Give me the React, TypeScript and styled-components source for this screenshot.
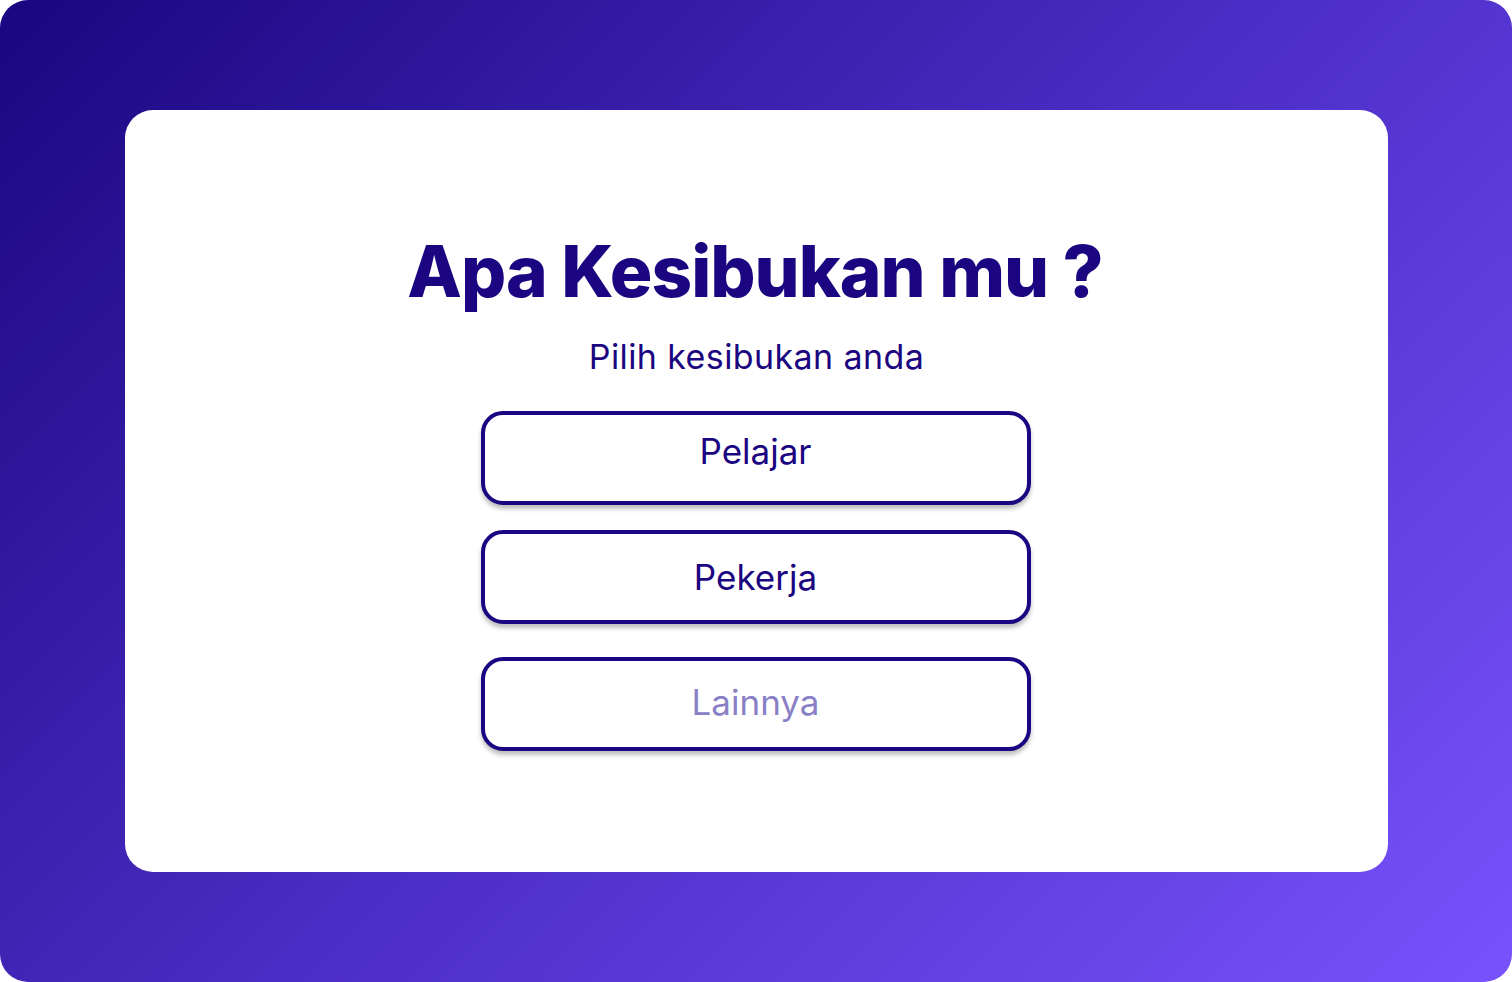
import React, { useState } from 'react';
import styled, { createGlobalStyle } from 'styled-components';

const GlobalStyle = createGlobalStyle`
  html, body {
    margin: 0;
    padding: 0;
    background: #ffffff;
  }
  * {
    box-sizing: border-box;
  }
`;

const Frame = styled.div`
  width: 1512px;
  height: 982px;
  border-radius: 28px;
  background: linear-gradient(135deg, #1a067f 0%, #4a2dc4 50%, #7852fc 100%);
  padding: 110px 124px 110px 125px;
  display: flex;
`;

const Card = styled.div`
  flex: 1;
  background: #ffffff;
  border-radius: 28px;
  display: flex;
  flex-direction: column;
  align-items: center;
  padding-top: 113px;
  font-family: Inter, 'Noto Sans', sans-serif;
  color: #1b0580;
`;

const Title = styled.h1`
  margin: 0;
  font-size: 71px;
  font-weight: 800;
  line-height: 97px;
  letter-spacing: -1px;
  margin-left: -3px;
`;

const Subtitle = styled.p`
  margin: 17px 0 0;
  font-size: 34px;
  font-weight: 400;
  line-height: 40px;
  letter-spacing: 0.4px;
`;

const Options = styled.div`
  display: flex;
  flex-direction: column;
  gap: 25px;
  margin-top: 34px;
  width: 550px;
  margin-left: -2px;
`;

const OptionButton = styled.button<{ $muted?: boolean; $shift: number; $space?: number }>`
  height: 94px;
  width: 100%;
  margin-top: ${(p) => p.$space ?? 0}px;
  background: #ffffff;
  border: 4px solid #1b0580;
  border-radius: 22px;
  box-shadow: 0 4px 4px rgba(0, 0, 0, 0.25);
  font-family: Inter, 'Noto Sans', sans-serif;
  font-size: 35px;
  font-weight: 400;
  color: ${(p) => (p.$muted ? '#8a80c6' : '#1b0580')};
  cursor: pointer;
  padding: 0 0 ${(p) => p.$shift}px;
`;

const options = [
  { label: 'Pelajar', shift: 14, space: 0 },
  { label: 'Pekerja', shift: 0, space: 0 },
];

export default function App() {
  const [selected, setSelected] = useState<string | null>(null);

  return (
    <>
      <GlobalStyle />
      <Frame>
        <Card>
          <Title>Apa Kesibukan mu ?</Title>
          <Subtitle>Pilih kesibukan anda</Subtitle>
          <Options>
            {options.map((opt) => (
              <OptionButton
                key={opt.label}
                $shift={opt.shift}
                $space={opt.space}
                onClick={() => setSelected(opt.label)}
              >
                {opt.label}
              </OptionButton>
            ))}
            <OptionButton $muted $shift={4} $space={8} onClick={() => setSelected('Lainnya')}>
              {selected === 'Lainnya' ? 'Lainnya' : 'Lainnya'}
            </OptionButton>
          </Options>
        </Card>
      </Frame>
    </>
  );
}
